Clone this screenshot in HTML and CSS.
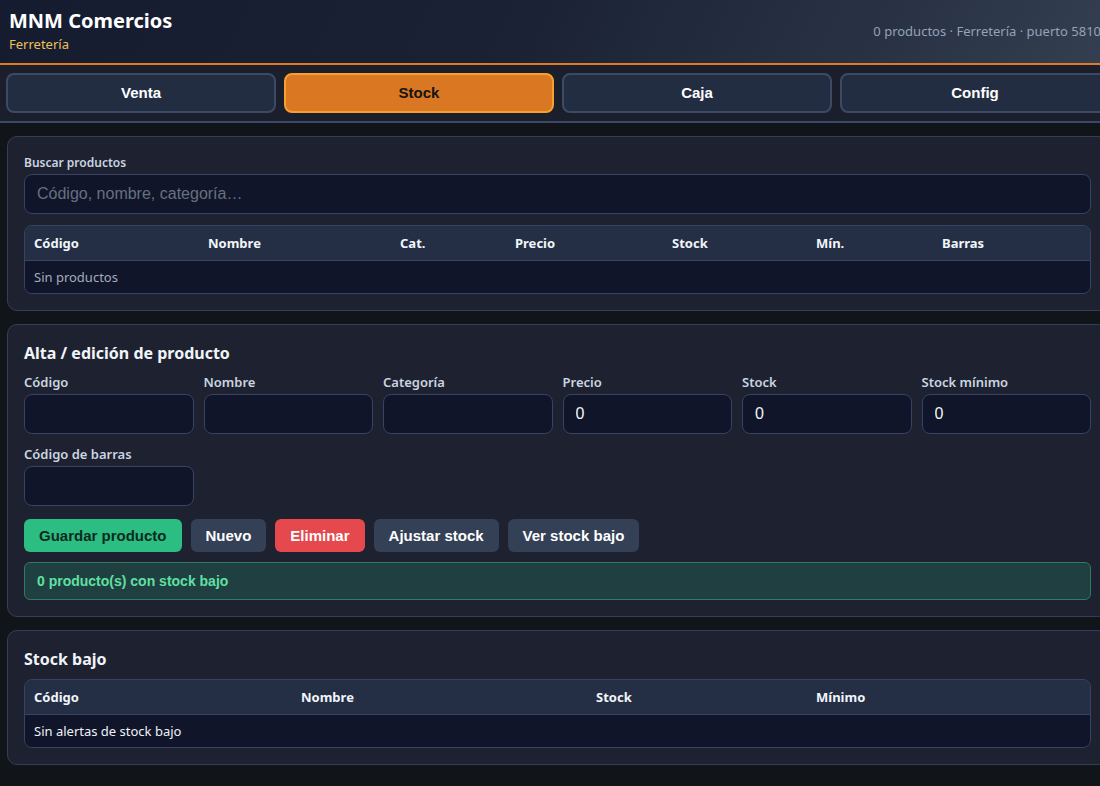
FILE: index.html
```html
<!DOCTYPE html>
<html lang="es">
<head>
<meta charset="utf-8">
<title>MNM Comercios</title>
<link rel="stylesheet" href="styles.css">
</head>
<body>
<div class="app">
  <header class="topbar">
    <div class="brand">
      <h1 class="brand-title">MNM Comercios</h1>
      <div class="brand-sub">Ferretería</div>
    </div>
    <div class="status">0 productos · Ferretería · puerto 5810</div>
  </header>
  <nav class="tabs">
    <button class="tab">Venta</button>
    <button class="tab tab-active">Stock</button>
    <button class="tab">Caja</button>
    <button class="tab">Config</button>
  </nav>
  <main class="main">
    <section class="card">
      <label class="label">Buscar productos</label>
      <input class="input" type="text" placeholder="Código, nombre, categoría…">
      <div class="table-wrap table-gap">
        <table class="table">
          <colgroup>
            <col style="width:174px"><col style="width:192px"><col style="width:115px"><col style="width:157px"><col style="width:144px"><col style="width:126px"><col>
          </colgroup>
          <thead>
            <tr><th>Código</th><th>Nombre</th><th>Cat.</th><th>Precio</th><th>Stock</th><th>Mín.</th><th>Barras</th></tr>
          </thead>
          <tbody>
            <tr><td colspan="7" class="muted">Sin productos</td></tr>
          </tbody>
        </table>
      </div>
    </section>

    <section class="card">
      <h2 class="card-title">Alta / edición de producto</h2>
      <div class="form-grid">
        <div class="field"><label class="label label-form">Código</label><input class="input" type="text"></div>
        <div class="field"><label class="label label-form">Nombre</label><input class="input" type="text"></div>
        <div class="field"><label class="label label-form">Categoría</label><input class="input" type="text"></div>
        <div class="field"><label class="label label-form">Precio</label><input class="input" type="text" value="0"></div>
        <div class="field"><label class="label label-form">Stock</label><input class="input" type="text" value="0"></div>
        <div class="field"><label class="label label-form">Stock mínimo</label><input class="input" type="text" value="0"></div>
        <div class="field"><label class="label label-form">Código de barras</label><input class="input" type="text"></div>
      </div>
      <div class="actions">
        <button class="btn btn-green">Guardar producto</button>
        <button class="btn btn-gray">Nuevo</button>
        <button class="btn btn-red">Eliminar</button>
        <button class="btn btn-gray">Ajustar stock</button>
        <button class="btn btn-gray">Ver stock bajo</button>
      </div>
      <div class="alert">0 producto(s) con stock bajo</div>
    </section>

    <section class="card">
      <h2 class="card-title">Stock bajo</h2>
      <div class="table-wrap">
        <table class="table">
          <colgroup>
            <col style="width:267px"><col style="width:295px"><col style="width:220px"><col>
          </colgroup>
          <thead>
            <tr><th>Código</th><th>Nombre</th><th>Stock</th><th>Mínimo</th></tr>
          </thead>
          <tbody>
            <tr><td colspan="4" class="light">Sin alertas de stock bajo</td></tr>
          </tbody>
        </table>
      </div>
    </section>
  </main>
</div>
</body>
</html>
```

FILE: styles.css
```css
html, body {
  margin: 0;
  padding: 0;
  overflow: hidden;
  background: #111418;
}
body {
  font-family: "Noto Sans", "Open Sans", sans-serif;
  color: #e5e7eb;
}
.app {
  width: 1116px;
  min-height: 786px;
  background: #111418;
}
.topbar {
  display: flex;
  justify-content: space-between;
  align-items: center;
  height: 61px;
  padding: 0 15px 2px 9px;
  background: linear-gradient(115deg, #161c30 0%, #1a2134 45%, #2a3346 80%, #343f52 100%);
  border-bottom: 2px solid #e07b22;
}
.brand-title {
  margin: 0;
  font-size: 20px;
  line-height: 26px;
  font-weight: 700;
  color: #ffffff;
}
.brand-sub {
  font-size: 13px;
  line-height: 18px;
  color: #ecc155;
  margin-top: 1px;
}
.status {
  font-size: 13px;
  color: #94a3b8;
}
.tabs {
  display: grid;
  grid-template-columns: repeat(4, 1fr);
  gap: 8px;
  padding: 8px 6px;
  background: #1b1f2b;
  border-bottom: 2px solid #3b4868;
}
.tab {
  height: 40px;
  background: #232d42;
  border: 2px solid #3d4a66;
  border-radius: 8px;
  color: #ffffff;
  font-family: "Liberation Sans", Arial, sans-serif;
  font-size: 15px;
  font-weight: 700;
  padding: 0 0 2px;
}
.tab-active {
  background: #d97722;
  border-color: #f5a030;
  color: #141414;
}
.main {
  display: flex;
  flex-direction: column;
  gap: 13px;
  padding: 13px 8px 13px 7px;
}
.card {
  background: #1e2230;
  border: 1px solid #333e58;
  border-radius: 10px;
  padding: 16px;
}
.card-title {
  margin: 0 0 8px;
  font-size: 16px;
  line-height: 24px;
  font-weight: 700;
  color: #f1f5f9;
}
.label {
  display: block;
  font-size: 12px;
  line-height: 19px;
  font-weight: 600;
  color: #cbd5e1;
  margin-bottom: 2px;
}
.label-form {
  font-size: 13px;
}
.input {
  display: block;
  width: 100%;
  box-sizing: border-box;
  height: 40px;
  background: #10152a;
  border: 1px solid #364364;
  border-radius: 8px;
  padding: 0 12px;
  color: #f1f5f9;
  font-family: "Liberation Sans", Arial, sans-serif;
  font-size: 16px;
  outline: none;
}
.input::placeholder {
  color: #687080;
}
.table-gap {
  margin-top: 11px;
}
.table-wrap {
  border: 1px solid #364364;
  border-radius: 8px;
  overflow: hidden;
}
.table {
  width: 100%;
  border-collapse: collapse;
  table-layout: fixed;
}
.table th {
  text-align: left;
  background: #242f45;
  color: #f1f5f9;
  font-size: 13px;
  font-weight: 700;
  height: 34px;
  padding: 0 9px;
  border-bottom: 1px solid #364364;
}
.table td {
  background: #10152a;
  font-size: 13px;
  height: 32px;
  padding: 0 9px;
}
.muted {
  color: #a3adbd;
}
.light {
  color: #eef2f7;
}
.form-grid {
  display: grid;
  grid-template-columns: repeat(6, 1fr);
  column-gap: 10px;
  row-gap: 11px;
}
.actions {
  display: flex;
  gap: 9px;
  margin-top: 13px;
}
.btn {
  height: 33px;
  padding: 0 15px;
  border: none;
  border-radius: 6px;
  font-family: "Liberation Sans", Arial, sans-serif;
  font-size: 15px;
  font-weight: 700;
  color: #ffffff;
}
.btn-green {
  background: #2bbd82;
  color: #0c2a1e;
}
.btn-gray {
  background: #344056;
}
.btn-red {
  background: #e5484d;
}
.alert {
  margin-top: 10px;
  height: 38px;
  box-sizing: border-box;
  display: flex;
  align-items: center;
  padding: 0 12px;
  background: #1f3f40;
  border: 1px solid #2e7d60;
  border-radius: 6px;
  color: #5fe0a3;
  font-family: "Liberation Sans", Arial, sans-serif;
  font-size: 14px;
  font-weight: 700;
}
```
